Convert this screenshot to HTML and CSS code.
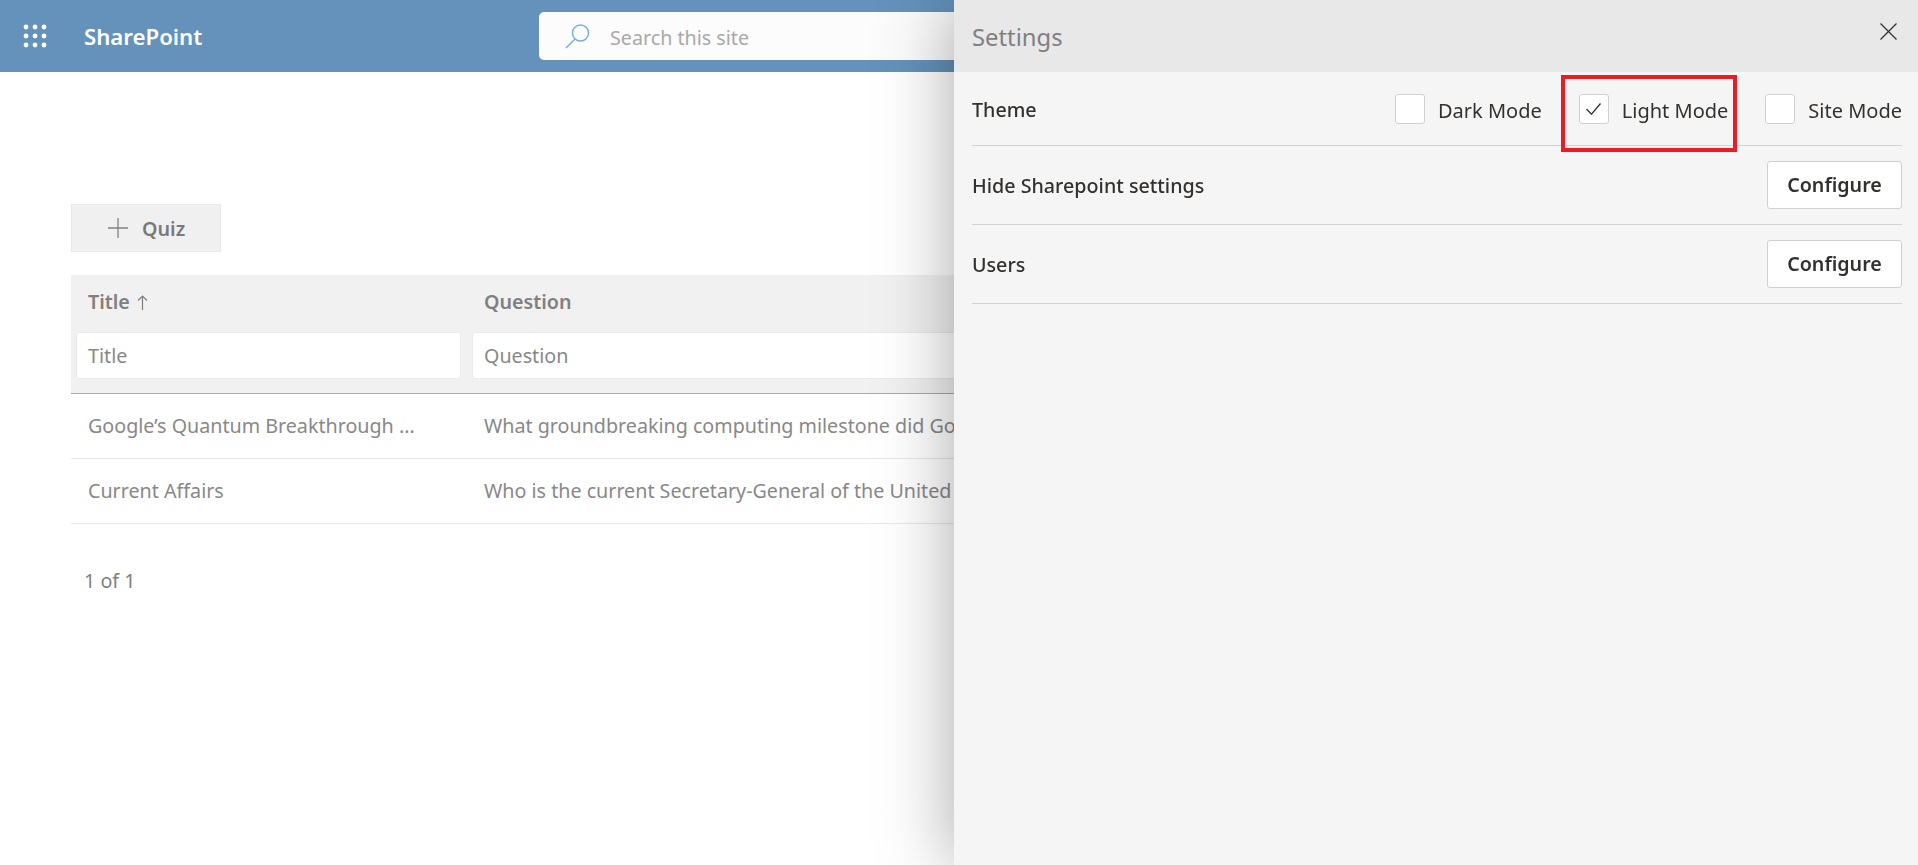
FILE: index.html
```html
<!DOCTYPE html>
<html lang="en">
<head>
    <meta charset="UTF-8">
    <title>SharePoint</title>
    <link rel="stylesheet" href="styles.css">
</head>
<body>
    <header class="topbar">
        <svg class="waffle" width="24" height="24" viewBox="0 0 24 24" fill="#fff">
            <circle cx="3" cy="3" r="2.4"/><circle cx="12" cy="3" r="2.4"/><circle cx="21" cy="3" r="2.4"/>
            <circle cx="3" cy="12" r="2.4"/><circle cx="12" cy="12" r="2.4"/><circle cx="21" cy="12" r="2.4"/>
            <circle cx="3" cy="21" r="2.4"/><circle cx="12" cy="21" r="2.4"/><circle cx="21" cy="21" r="2.4"/>
        </svg>
        <span class="brand">SharePoint</span>
        <div class="search">
            <svg width="25" height="25" viewBox="0 0 25 25" fill="none" stroke="#74aee0" stroke-width="1.4">
                <circle cx="15.5" cy="9" r="8"/>
                <path d="M10 15 1 24"/>
            </svg>
            <span class="search-text">Search this site</span>
        </div>
    </header>

    <main class="content">
        <button class="add-btn">
            <svg width="20" height="20" viewBox="0 0 20 20" stroke="#808080" stroke-width="1.3"><path d="M10 0v20M0 10h20"/></svg>
            <span>Quiz</span>
        </button>

        <div class="list">
            <div class="list-head">
                <div class="head-row">
                    <div class="col-title">Title
                        <svg class="sort" width="11" height="15" viewBox="0 0 11 15" fill="none" stroke="#808080" stroke-width="1.2"><path d="M5.5 15V1M1 5.5l4.5-4.5L10 5.5"/></svg>
                    </div>
                    <div class="col-question">Question</div>
                </div>
                <div class="filter-row">
                    <div class="filter filter-title">Title</div>
                    <div class="filter filter-question">Question</div>
                </div>
            </div>
            <div class="list-row">
                <div class="col-title">Google&rsquo;s Quantum Breakthrough ...</div>
                <div class="col-question">What groundbreaking computing milestone did Google achieve?</div>
            </div>
            <div class="list-row">
                <div class="col-title">Current Affairs</div>
                <div class="col-question">Who is the current Secretary-General of the United Nations?</div>
            </div>
        </div>

        <p class="pager">1 of 1</p>
    </main>

    <aside class="panel">
        <div class="panel-head">
            <span class="panel-title">Settings</span>
            <svg class="panel-close" width="17" height="17" viewBox="0 0 17 17" stroke="#333" stroke-width="1.3"><path d="M.5.5l16 16M16.5.5l-16 16"/></svg>
        </div>
        <div class="panel-body">
            <div class="setting setting-theme">
                <span class="setting-name">Theme</span>
                <div class="modes">
                    <label class="mode"><span class="box"></span><span class="mode-text">Dark Mode</span></label>
                    <label class="mode">
                        <span class="box">
                            <svg width="15" height="12" viewBox="0 0 15 12" fill="none" stroke="#333" stroke-width="1.3"><path d="M.5 6l5 5.2L14.5.5"/></svg>
                        </span>
                        <span class="mode-text">Light Mode</span>
                        <span class="red-box"></span>
                    </label>
                    <label class="mode"><span class="box"></span><span class="mode-text">Site Mode</span></label>
                </div>
            </div>
            <div class="setting">
                <span class="setting-name">Hide Sharepoint settings</span>
                <button class="config-btn">Configure</button>
            </div>
            <div class="setting">
                <span class="setting-name">Users</span>
                <button class="config-btn">Configure</button>
            </div>
        </div>
    </aside>
</body>
</html>
```

FILE: styles.css
```css
html, body {
    height: 100%;
}
body {
    margin: 0;
    height: 865px;
    overflow: hidden;
    background: #fff;
    font-family: "Noto Sans", "Open Sans", sans-serif;
    font-size: 19.7px;
    color: #808080;
}
.topbar {
    display: flex;
    align-items: center;
    height: 72px;
    padding-left: 23px;
    background: #6492ba;
}
.brand {
    margin-left: 37px;
    width: 455px;
    padding-top: 1px;
    color: #fff;
    font-size: 22.2px;
    font-weight: 600;
}
.search {
    display: flex;
    align-items: center;
    flex: 1;
    height: 48px;
    padding-left: 26px;
    background: #fcfcfc;
    border-radius: 5px;
}
.search-text {
    margin-left: 20px;
    padding-top: 2px;
    color: #a9a9a9;
}
.content {
    padding: 132px 0 0 71px;
}
.add-btn {
    display: flex;
    align-items: center;
    gap: 14px;
    width: 150px;
    height: 48px;
    padding: 0 0 0 36px;
    background: #f0f0f0;
    border: 1px solid #e8e8e8;
    color: #7a7a7a;
    font: 600 19.7px "Noto Sans", sans-serif;
}
.list {
    margin-top: 23px;
}
.list-head {
    height: 118px;
    background: #f1f1f1;
    border-bottom: 1px solid #aaa;
}
.head-row {
    display: flex;
    align-items: center;
    height: 52px;
    padding-bottom: 5px;
    font-weight: 600;
}
.sort {
    margin-left: 2px;
    vertical-align: -1px;
}
.col-title {
    width: 396px;
    padding-left: 17px;
    box-sizing: border-box;
    white-space: nowrap;
}
.col-question {
    padding-left: 17px;
    white-space: nowrap;
}
.filter-row {
    display: flex;
    gap: 11px;
    padding-left: 5px;
}
.filter {
    height: 47px;
    box-sizing: border-box;
    display: flex;
    align-items: center;
    padding-left: 11px;
    background: #fff;
    border: 1px solid #ebebeb;
    border-radius: 3px;
    color: #888;
}
.filter-title {
    width: 385px;
}
.filter-question {
    flex: 1;
}
.list-row {
    display: flex;
    align-items: center;
    height: 65px;
    padding-bottom: 1px;
    box-sizing: border-box;
    border-bottom: 1px solid #e8e8e8;
    color: #888;
}
.pager {
    margin: 38px 0 0 13px;
    line-height: 38px;
}

/* settings flyout sits over the page */
.panel {
    position: fixed;
    top: 0;
    right: 0;
    bottom: 0;
    width: 964px;
    background: #f5f5f5;
    box-shadow: 0 0 70px rgba(0, 0, 0, 0.35);
    color: #323130;
}
.panel-head {
    display: flex;
    align-items: center;
    justify-content: space-between;
    height: 72px;
    padding: 0 21px 0 18px;
    background: #e8e8e8;
}
.panel-title {
    padding-top: 2px;
    color: #808080;
    font-size: 23.8px;
}
.panel-close {
    align-self: flex-start;
    margin-top: 23px;
}
.panel-body {
    padding: 0 16px 0 18px;
}
.setting {
    display: flex;
    align-items: center;
    justify-content: space-between;
    height: 78px;
    border-bottom: 1.5px solid #d2d2d2;
}
.setting-theme {
    height: 73px;
}
.setting-theme .setting-name {
    padding-top: 2px;
}
.setting-name {
    font-weight: 500;
}
.modes {
    display: flex;
    gap: 37px;
}
.mode {
    position: relative;
    display: flex;
    align-items: center;
    gap: 13px;
    font-size: 20px;
}
.mode-text {
    padding-top: 3px;
}
.box {
    display: flex;
    align-items: center;
    justify-content: center;
    width: 30px;
    height: 30px;
    box-sizing: border-box;
    background: #fff;
    border: 1px solid #d0d0d0;
    border-radius: 3px;
}
.red-box {
    position: absolute;
    top: -19px;
    left: -18px;
    width: 176px;
    height: 77px;
    box-sizing: border-box;
    border: 4px solid #ea1c24;
}
.config-btn {
    width: 135px;
    height: 48px;
    padding-bottom: 3px;
    background: #fff;
    border: 1px solid #d0d0d0;
    border-radius: 3px;
    color: #323130;
    font: 600 19.7px "Noto Sans", sans-serif;
}
```
